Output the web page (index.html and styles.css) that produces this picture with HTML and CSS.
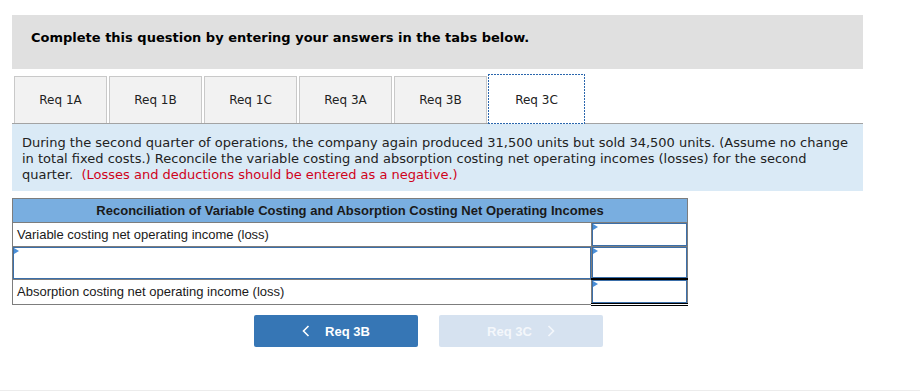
FILE: index.html
```html
<!DOCTYPE HTML>
<html lang="en">
  <head>
    <title>Req 3C</title>
    <meta charset="utf-8">
    <link rel="stylesheet" href="styles.css">
  </head>
  <body>

  <div id="question">

    <div class="instructions">
      Complete this question by entering your answers in the tabs below.
    </div>

    <div class="tabs">
      <div class="tab">Req 1A</div>
      <div class="tab">Req 1B</div>
      <div class="tab">Req 1C</div>
      <div class="tab">Req 3A</div>
      <div class="tab">Req 3B</div>
      <div class="tab active">Req 3C</div>
    </div>

    <div class="prompt">
      During the second quarter of operations, the company again produced 31,500 units but sold 34,500 units. (Assume no change
      in total fixed costs.) Reconcile the variable costing and absorption costing net operating incomes (losses) for the second
      quarter.&nbsp; <span class="hint">(Losses and deductions should be entered as a negative.)</span>
    </div>

    <table class="answer">
      <colgroup>
        <col class="col-label">
        <col class="col-value">
      </colgroup>
      <tr>
        <th colspan="2">Reconciliation of Variable Costing and Absorption Costing Net Operating Incomes</th>
      </tr>
      <tr class="row1">
        <td class="label">Variable costing net operating income (loss)</td>
        <td class="cell"><div class="field"><span class="flag"></span></div></td>
      </tr>
      <tr class="row2">
        <td class="cell"><div class="field"><span class="flag"></span></div></td>
        <td class="cell"><div class="field"><span class="flag"></span></div></td>
      </tr>
      <tr class="row3">
        <td class="label">Absorption costing net operating income (loss)</td>
        <td class="cell total"><div class="field"><span class="flag"></span></div></td>
      </tr>
    </table>

    <div class="nav">
      <a class="btn prev">
        <svg width="8" height="12" viewBox="0 0 8 12"><polyline points="6.5,1 1.5,6 6.5,11" fill="none" stroke="#fff" stroke-width="1.6"/></svg>
        <span>Req 3B</span>
      </a>
      <a class="btn next">
        <span>Req 3C</span>
        <svg width="8" height="12" viewBox="0 0 8 12"><polyline points="1.5,1 6.5,6 1.5,11" fill="none" stroke="#fff" stroke-width="1.6"/></svg>
      </a>
    </div>

  </div>

  <div class="footer"></div>

  </body>
</html>
```

FILE: styles.css
```css
html {
  height: 100%;
}
body {
  margin: 0;
  padding: 0;
  background: #ffffff;
  color: #000000;
  font-family: "DejaVu Sans", Verdana, sans-serif;
  font-size: 13px;
}

#question {
  width: 851px;
  padding: 15px 0 0 12px;
}

.instructions {
  height: 54px;
  display: flex;
  align-items: center;
  padding: 0 0 10px 19px;
  box-sizing: border-box;
  background-color: #e0e0e0;
  font-weight: bold;
  font-size: 13px;
}

.tabs {
  display: flex;
  align-items: flex-end;
  gap: 2px;
  margin-top: 5px;
  padding-left: 2px;
  border-bottom: 1px solid #a3a3a3;
}

.tab {
  width: 93px;
  height: 47px;
  box-sizing: border-box;
  display: flex;
  align-items: center;
  justify-content: center;
  background-color: #f2f2f2;
  border: 1px solid #c9c9c9;
  border-bottom: none;
  font-size: 12px;
  color: #222;
}

/* dotted focus frame, drawn with gradients so the dots read like the original */
.tab.active {
  width: 97px;
  height: 50px;
  margin-left: -1px;
  margin-bottom: -1px;
  padding-top: 2px;
  border: none;
  background:
    repeating-linear-gradient(90deg, #2a66ad 0 2px, transparent 2px 3px) top left / 100% 1px no-repeat,
    repeating-linear-gradient(90deg, #2a66ad 0 2px, transparent 2px 3px) bottom left / 100% 1px no-repeat,
    repeating-linear-gradient(180deg, #2a66ad 0 2px, transparent 2px 3px) top left / 1px 100% no-repeat,
    repeating-linear-gradient(180deg, #2a66ad 0 2px, transparent 2px 3px) top right / 1px 100% no-repeat,
    #ffffff;
}

.prompt {
  background-color: #daeaf6;
  padding: 11px 10px 8px 10px;
  line-height: 16px;
  font-size: 13px;
  color: #222;
}

.hint {
  color: #d0021b;
}

.answer {
  margin-top: 7px;
  width: 675px;
  table-layout: fixed;
  border-collapse: collapse;
  font-family: "Liberation Sans", Arial, sans-serif;
  font-size: 13px;
}

.col-label {
  width: 579px;
}

.col-value {
  width: 96px;
}

.answer th {
  height: 23px;
  background-color: #79aee0;
  border: 1px solid #7d7d7d;
  font-weight: bold;
  color: #1a1a1a;
  padding: 0;
}

.answer td {
  border: 1px solid #7d7d7d;
  padding: 0;
}

.answer td.label {
  padding-left: 4px;
  color: #1a1a1a;
}

.answer td.cell {
  position: relative;
}

.row1 td { height: 23px; }
.row2 td { height: 31px; }
.row3 td { height: 23px; }

.field {
  position: absolute;
  top: 0;
  left: 0;
  right: 0;
  bottom: 0;
  border: 1px solid #3b6fa9;
}

.flag {
  position: absolute;
  top: 0;
  left: 0;
  width: 0;
  height: 0;
  border-top: 3px solid transparent;
  border-bottom: 3px solid transparent;
  border-left: 5px solid #4a8fd8;
}

.answer td.total {
  border-top: 2px solid #000;
  border-bottom: 3px double #000;
}

.nav {
  display: flex;
  gap: 21px;
  margin-top: 9px;
  padding-left: 242px;
}

.btn {
  width: 164px;
  height: 32px;
  border-radius: 2px;
  display: flex;
  align-items: center;
  justify-content: center;
  gap: 15px;
  font-family: "Liberation Sans", Arial, sans-serif;
  font-weight: bold;
  font-size: 13px;
  color: #ffffff;
}

.btn.prev {
  background-color: #3676b5;
}

.btn.next {
  background-color: #d6e2f0;
  color: #f4f7fb;
}

.btn.next polyline {
  stroke: #f4f7fb;
}

.footer {
  margin-top: 43px;
  border-top: 1px solid #ececec;
}
```
